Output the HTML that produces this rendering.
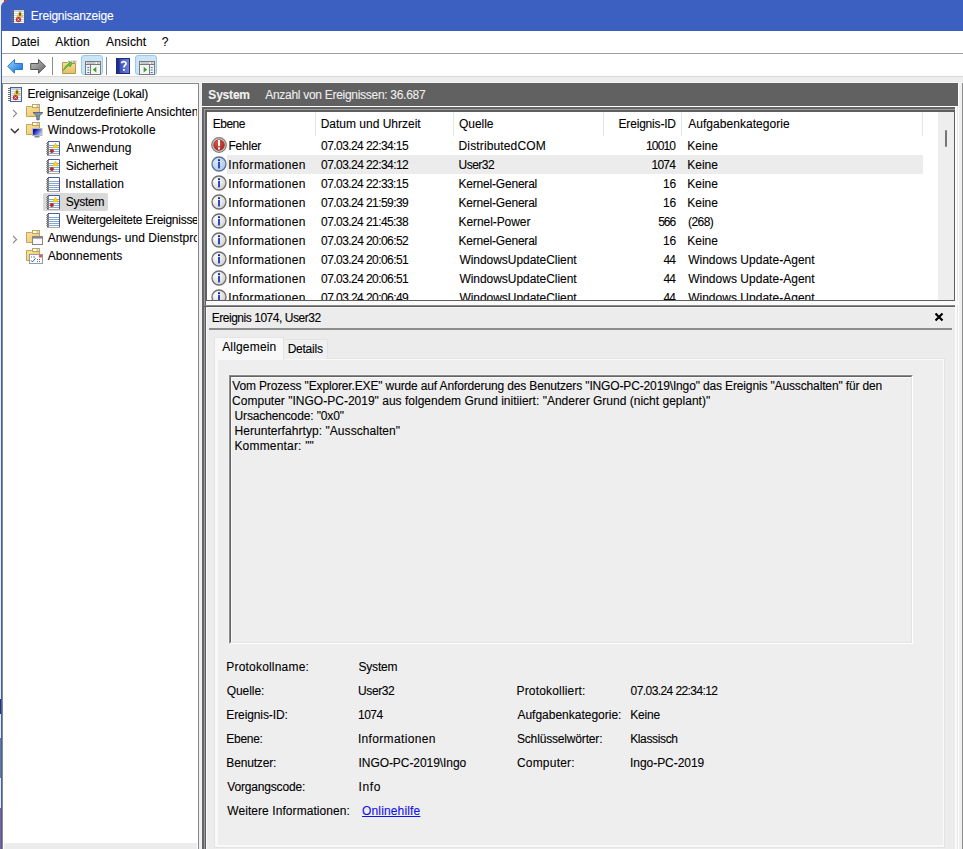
<!DOCTYPE html><html><head><meta charset="utf-8"><style>
html,body{margin:0;padding:0;}
body{width:963px;height:849px;position:relative;overflow:hidden;background:#f0f0f0;font-family:"Liberation Sans",sans-serif;}
.r{position:absolute;display:block;}
.t{position:absolute;white-space:nowrap;-webkit-text-stroke:0.1px currentColor;}
</style></head><body>
<div class="r" style="left:0px;top:0px;width:1px;height:849px;background:#eeece6"></div>
<div class="r" style="left:0px;top:699px;width:1px;height:15px;background:#2c3752"></div>
<div class="r" style="left:0px;top:738px;width:1px;height:40px;background:#6f7f6f"></div>
<div class="r" style="left:0px;top:808px;width:1px;height:41px;background:#9c5c6c"></div>
<div class="r" style="left:0px;top:0px;width:10px;height:8px;background:#f1eee6"></div>
<div class="r" style="left:4px;top:0px;width:5px;height:1.5px;background:#d8382a"></div>
<div class="r" style="left:1px;top:1px;width:962px;height:30px;background:#3b60c1;border-top-left-radius:6px"></div>
<div class="r" style="left:7px;top:0px;width:956px;height:1px;background:#3b60c1"></div>
<div class="r" style="left:1px;top:6px;width:1px;height:843px;background:#3b60c1"></div>
<svg class="r" style="left:10px;top:7.5px" width="16" height="17" viewBox="0 0 16 17">
<rect x="3.5" y="1.5" width="11" height="14" fill="#c3d3ec" stroke="#4d5d9c"/>
<path d="M4 4.5h10M4 6.5h10M4 8.5h10M4 10.5h10M4 12.5h10M4 14.5h10" stroke="#fbfdff" stroke-width="1"/>
<path d="M1 2.5h2.6M1 4.5h2.6M1 6.5h2.6M1 8.5h2.6M1 10.5h2.6M1 12.5h2.6M1 14.5h2.6" stroke="#707070" stroke-width="1.1"/>
<path d="M10 2.8L13.1 8.8H6.9z" fill="#f1cc1c" stroke="#c9a21a" stroke-width="0.5"/>
<rect x="9.4" y="4.6" width="1.2" height="3.2" fill="#222"/>
<circle cx="8.5" cy="11.6" r="2.7" fill="#c0302a"/>
<path d="M7.6 10.7l1.8 1.8M9.4 10.7l-1.8 1.8" stroke="#fff" stroke-width="0.9"/>
</svg>
<div class="t" style="left:30.79px;top:8.00px;font-size:12px;line-height:16px;color:#fff;;letter-spacing:-0.184px">Ereignisanzeige</div>
<div class="r" style="left:2px;top:31px;width:961px;height:22px;background:#fff"></div>
<div class="t" style="left:11.44px;top:34.00px;font-size:12px;line-height:16px;color:#000;;letter-spacing:-0.030px">Datei</div>
<div class="t" style="left:55.24px;top:34.00px;font-size:12px;line-height:16px;color:#000;;letter-spacing:0.236px">Aktion</div>
<div class="t" style="left:106.04px;top:34.00px;font-size:12px;line-height:16px;color:#000;;letter-spacing:0.137px">Ansicht</div>
<div class="t" style="left:161.72px;top:34.00px;font-size:12px;line-height:16px;color:#000;;letter-spacing:0.000px">?</div>
<div class="r" style="left:2px;top:53px;width:961px;height:1px;background:#a0a0a0"></div>
<div class="r" style="left:2px;top:54px;width:961px;height:22px;background:#fff"></div>
<svg class="r" style="left:7px;top:58px" width="17" height="17" viewBox="0 0 17 17"><defs><linearGradient id="ba" x1="0" y1="0" x2="1" y2="1"><stop offset="0" stop-color="#a6d6fb"/><stop offset="0.55" stop-color="#4d9cec"/><stop offset="1" stop-color="#1f62c8"/></linearGradient></defs>
<path d="M0.7 8.3L7.5 1.4V5.5H15.5V11.5H7.5V15.2z" fill="url(#ba)" stroke="#2f74cf" stroke-width="1"/></svg>
<svg class="r" style="left:30px;top:58px" width="17" height="17" viewBox="0 0 17 17"><defs><linearGradient id="fa" x1="0" y1="0" x2="1" y2="1"><stop offset="0" stop-color="#c4c4c4"/><stop offset="0.6" stop-color="#8a8a8a"/><stop offset="1" stop-color="#5e5e5e"/></linearGradient></defs>
<path d="M15.6 8.3L8.5 1.4V5.5H0.7V11.5H8.5V15.2z" fill="url(#fa)" stroke="#555" stroke-width="1"/></svg>
<div class="r" style="left:52px;top:57px;width:1px;height:18px;background:#8a8a8a"></div>
<svg class="r" style="left:62px;top:59px" width="15" height="15" viewBox="0 0 15 15"><defs><linearGradient id="fu" x1="0" y1="0" x2="0" y2="1"><stop offset="0" stop-color="#f7df9c"/><stop offset="1" stop-color="#e2bd62"/></linearGradient></defs>
<path d="M0.5 3.5h5l1 1h7v10h-13z" fill="url(#fu)" stroke="#b8964a"/>
<rect x="9" y="2" width="5" height="2" fill="#fff" stroke="#b8964a" stroke-width="0.6"/><rect x="11" y="2.5" width="2" height="1" fill="#4f8fd8"/>
<path d="M1.5 11.5C2.5 8 4.5 5.5 7.5 4.5L6.5 2L10.5 4.2L8 8L7.8 6.3C5.5 7 3.5 9 1.5 11.5z" fill="#62c43e" stroke="#3f9a24" stroke-width="0.6"/></svg>
<div class="r" style="left:81px;top:55px;width:22px;height:20px;background:#cce4f7;border:1px solid #99c9ef;border-radius:3px;box-sizing:border-box"></div>
<svg class="r" style="left:85px;top:60.5px" width="17" height="14" viewBox="0 0 17 14"><rect x="0.5" y="0.5" width="15" height="13" fill="#f4f4f4" stroke="#7a7a7a"/>
<path d="M1 3.5h14" stroke="#7a7a7a"/><rect x="1.5" y="1.5" width="9" height="1" fill="#9a9a9a"/><rect x="12" y="1.5" width="1" height="1" fill="#7a7a7a"/><rect x="13.5" y="1.5" width="1" height="1" fill="#7a7a7a"/>
<path d="M5.5 4v9" stroke="#7a7a7a"/>
<rect x="2.3" y="6" width="2" height="1" fill="#3a6fc0"/><rect x="2.3" y="8.5" width="2" height="1" fill="#3a6fc0"/><rect x="2.3" y="11" width="2" height="1" fill="#3a6fc0"/>
<path d="M11.3 5.8L7.8 8.7L11.3 11.6z" fill="#3aa12a"/></svg>
<div class="r" style="left:106px;top:57px;width:1px;height:18px;background:#8a8a8a"></div>
<svg class="r" style="left:116px;top:58px" width="14" height="16" viewBox="0 0 14 16"><defs><linearGradient id="hp" x1="0" y1="0" x2="1" y2="0"><stop offset="0" stop-color="#2c3fa8"/><stop offset="1" stop-color="#7084dc"/></linearGradient></defs>
<rect x="0.5" y="0.5" width="13" height="15" fill="url(#hp)" stroke="#1d2a7a"/>
<rect x="1" y="1" width="2.5" height="14" fill="#1f2f8e"/>
<path d="M5.6 5.3C5.6 3.2 10 3 10 5.4C10 7.1 7.9 7.3 7.9 9.6" fill="none" stroke="#fff" stroke-width="1.7"/>
<rect x="7" y="11" width="1.8" height="1.8" fill="#fff"/></svg>
<div class="r" style="left:135px;top:55px;width:22px;height:20px;background:#cce4f7;border:1px solid #99c9ef;border-radius:3px;box-sizing:border-box"></div>
<svg class="r" style="left:139px;top:60.5px" width="17" height="14" viewBox="0 0 17 14"><rect x="0.5" y="0.5" width="15" height="13" fill="#f4f4f4" stroke="#7a7a7a"/>
<path d="M1 3.5h14" stroke="#7a7a7a"/><rect x="1.5" y="1.5" width="9" height="1" fill="#9a9a9a"/><rect x="12" y="1.5" width="1" height="1" fill="#7a7a7a"/><rect x="13.5" y="1.5" width="1" height="1" fill="#7a7a7a"/>
<path d="M10.5 4v9" stroke="#7a7a7a"/>
<rect x="11.7" y="6" width="2" height="1" fill="#3a6fc0"/><rect x="11.7" y="8.5" width="2" height="1" fill="#3a6fc0"/><rect x="11.7" y="11" width="2" height="1" fill="#3a6fc0"/>
<path d="M4.7 5.8L8.2 8.7L4.7 11.6z" fill="#3aa12a"/></svg>
<div class="r" style="left:2px;top:76px;width:961px;height:1px;background:#dadada"></div>
<div class="r" style="left:2px;top:77px;width:961px;height:5px;background:#ededed"></div>
<div class="r" style="left:2px;top:82px;width:961px;height:1px;background:#f6f6f6"></div>
<div class="r" style="left:2px;top:83px;width:197px;height:766px;background:#fff;border:1px solid #828790;border-bottom:none;box-sizing:border-box"></div>
<div class="r" style="left:4px;top:843px;width:193px;height:6px;background:#ececec"></div>
<div class="r" style="left:43px;top:193px;width:65px;height:17.5px;background:#d9d9d9;border-radius:2px"></div>
<div class="r" style="left:3px;top:84px;width:194px;height:759px;overflow:hidden">
<div class="r" style="left:-3px;top:-84px;width:963px;height:849px">
<svg class="r" style="left:7px;top:86px" width="16" height="17" viewBox="0 0 16 17">
<rect x="3.5" y="1.5" width="11" height="14" fill="#c3d3ec" stroke="#4d5d9c"/>
<path d="M4 4.5h10M4 6.5h10M4 8.5h10M4 10.5h10M4 12.5h10M4 14.5h10" stroke="#fbfdff" stroke-width="1"/>
<path d="M1 2.5h2.6M1 4.5h2.6M1 6.5h2.6M1 8.5h2.6M1 10.5h2.6M1 12.5h2.6M1 14.5h2.6" stroke="#707070" stroke-width="1.1"/>
<path d="M10 2.8L13.1 8.8H6.9z" fill="#f1cc1c" stroke="#c9a21a" stroke-width="0.5"/>
<rect x="9.4" y="4.6" width="1.2" height="3.2" fill="#222"/>
<circle cx="8.5" cy="11.6" r="2.7" fill="#c0302a"/>
<path d="M7.6 10.7l1.8 1.8M9.4 10.7l-1.8 1.8" stroke="#fff" stroke-width="0.9"/>
</svg>
<div class="t" style="left:27.44px;top:86.00px;font-size:12px;line-height:16px;color:#000;;letter-spacing:-0.210px">Ereignisanzeige (Lokal)</div>
<svg class="r" style="left:26px;top:104px" width="18" height="17" viewBox="0 0 18 17">
<defs><linearGradient id="fg" x1="0" y1="0" x2="1" y2="1"><stop offset="0" stop-color="#f9e3a0"/><stop offset="1" stop-color="#e9c46a"/></linearGradient></defs>
<path d="M0.5 2.5h5l1 1h7v9h-13z" fill="url(#fg)" stroke="#c7a451" stroke-width="1"/>
<rect x="6.5" y="0.5" width="7" height="3" fill="#fff" stroke="#c7a451"/>
<rect x="10.5" y="1.5" width="2" height="1" fill="#4f8fd8"/>
<path d="M7 8.5h10l-3.8 3.5v3.8h-2.4v-3.8z" fill="#7f95ae" stroke="#46566e" stroke-width="0.8"/></svg>
<svg class="r" style="left:12px;top:109px" width="6" height="9" viewBox="0 0 6 9"><path d="M1 0.8L4.6 4.5L1 8.2" fill="none" stroke="#8c8c8c" stroke-width="1.2"/></svg>
<div class="t" style="left:46.74px;top:104.00px;font-size:12px;line-height:16px;color:#000;;letter-spacing:-0.042px">Benutzerdefinierte Ansichten</div>
<svg class="r" style="left:26px;top:122px" width="18" height="17" viewBox="0 0 18 17">
<defs><linearGradient id="fg" x1="0" y1="0" x2="1" y2="1"><stop offset="0" stop-color="#f9e3a0"/><stop offset="1" stop-color="#e9c46a"/></linearGradient></defs>
<path d="M0.5 2.5h5l1 1h7v9h-13z" fill="url(#fg)" stroke="#c7a451" stroke-width="1"/>
<rect x="6.5" y="0.5" width="7" height="3" fill="#fff" stroke="#c7a451"/>
<rect x="10.5" y="1.5" width="2" height="1" fill="#4f8fd8"/>
<defs><linearGradient id="scr" x1="0" y1="0" x2="1" y2="0.6"><stop offset="0.3" stop-color="#0a10b8"/><stop offset="1" stop-color="#b8c8f8"/></linearGradient></defs><rect x="6.5" y="6.5" width="9.5" height="7" fill="url(#scr)" stroke="#b9b9b0" stroke-width="1"/><path d="M8.5 14.8h5" stroke="#666" stroke-width="1.2"/></svg>
<svg class="r" style="left:9.5px;top:128px" width="10" height="6" viewBox="0 0 10 6"><path d="M0.8 0.8L4.8 4.8L8.8 0.8" fill="none" stroke="#333" stroke-width="1.4"/></svg>
<div class="t" style="left:47.64px;top:122.00px;font-size:12px;line-height:16px;color:#000;;letter-spacing:0.111px">Windows-Protokolle</div>
<svg class="r" style="left:45px;top:141px" width="16" height="16" viewBox="0 0 16 16">
<rect x="3.5" y="0.5" width="11" height="14" fill="#fff"/>
<path d="M3 0.5h11.5v14" fill="none" stroke="#4b5ca4"/>
<path d="M3.5 14.5h11" stroke="#a8a8a8"/>
<path d="M4 4.5h10M4 6.5h10M4 8.5h10M4 10.5h10M4 12.5h10" stroke="#86a8d0" stroke-width="1"/>
<rect x="2" y="1" width="1.8" height="13.5" fill="#5a5a5a"/>
<path d="M1 2.5h2.5M1 4.5h2.5M1 6.5h2.5M1 8.5h2.5M1 10.5h2.5M1 12.5h2.5" stroke="#9a9a9a" stroke-width="1"/>
<path d="M10.5 2L13.3 6.9H7.7z" fill="#f3dc1c" stroke="#c9b010" stroke-width="0.5"/><circle cx="6.9" cy="10.1" r="2" fill="#b82a22"/></svg>
<div class="t" style="left:66.34px;top:140.00px;font-size:12px;line-height:16px;color:#000;;letter-spacing:0.222px">Anwendung</div>
<svg class="r" style="left:45px;top:159px" width="16" height="16" viewBox="0 0 16 16">
<rect x="3.5" y="0.5" width="11" height="14" fill="#fff"/>
<path d="M3 0.5h11.5v14" fill="none" stroke="#4b5ca4"/>
<path d="M3.5 14.5h11" stroke="#a8a8a8"/>
<path d="M4 4.5h10M4 6.5h10M4 8.5h10M4 10.5h10M4 12.5h10" stroke="#86a8d0" stroke-width="1"/>
<rect x="2" y="1" width="1.8" height="13.5" fill="#5a5a5a"/>
<path d="M1 2.5h2.5M1 4.5h2.5M1 6.5h2.5M1 8.5h2.5M1 10.5h2.5M1 12.5h2.5" stroke="#9a9a9a" stroke-width="1"/>
<path d="M10.5 2L13.3 6.9H7.7z" fill="#f3dc1c" stroke="#c9b010" stroke-width="0.5"/><circle cx="6.9" cy="10.1" r="2" fill="#b82a22"/></svg>
<div class="t" style="left:65.86px;top:158.00px;font-size:12px;line-height:16px;color:#000;;letter-spacing:-0.171px">Sicherheit</div>
<svg class="r" style="left:45px;top:177px" width="16" height="16" viewBox="0 0 16 16">
<rect x="3.5" y="0.5" width="11" height="14" fill="#fff"/>
<path d="M3 0.5h11.5v14" fill="none" stroke="#4b5ca4"/>
<path d="M3.5 14.5h11" stroke="#a8a8a8"/>
<path d="M4 4.5h10M4 6.5h10M4 8.5h10M4 10.5h10M4 12.5h10" stroke="#86a8d0" stroke-width="1"/>
<rect x="2" y="1" width="1.8" height="13.5" fill="#5a5a5a"/>
<path d="M1 2.5h2.5M1 4.5h2.5M1 6.5h2.5M1 8.5h2.5M1 10.5h2.5M1 12.5h2.5" stroke="#9a9a9a" stroke-width="1"/>
</svg>
<div class="t" style="left:65.32px;top:176.00px;font-size:12px;line-height:16px;color:#000;;letter-spacing:0.118px">Installation</div>
<svg class="r" style="left:45px;top:195px" width="16" height="16" viewBox="0 0 16 16">
<rect x="3.5" y="0.5" width="11" height="14" fill="#fff"/>
<path d="M3 0.5h11.5v14" fill="none" stroke="#4b5ca4"/>
<path d="M3.5 14.5h11" stroke="#a8a8a8"/>
<path d="M4 4.5h10M4 6.5h10M4 8.5h10M4 10.5h10M4 12.5h10" stroke="#86a8d0" stroke-width="1"/>
<rect x="2" y="1" width="1.8" height="13.5" fill="#5a5a5a"/>
<path d="M1 2.5h2.5M1 4.5h2.5M1 6.5h2.5M1 8.5h2.5M1 10.5h2.5M1 12.5h2.5" stroke="#9a9a9a" stroke-width="1"/>
<path d="M10.5 2L13.3 6.9H7.7z" fill="#f3dc1c" stroke="#c9b010" stroke-width="0.5"/><circle cx="6.9" cy="10.1" r="2" fill="#b82a22"/></svg>
<div class="t" style="left:65.86px;top:194.00px;font-size:12px;line-height:16px;color:#000;;letter-spacing:-0.288px">System</div>
<svg class="r" style="left:45px;top:213px" width="16" height="16" viewBox="0 0 16 16">
<rect x="3.5" y="0.5" width="11" height="14" fill="#fff"/>
<path d="M3 0.5h11.5v14" fill="none" stroke="#4b5ca4"/>
<path d="M3.5 14.5h11" stroke="#a8a8a8"/>
<path d="M4 4.5h10M4 6.5h10M4 8.5h10M4 10.5h10M4 12.5h10" stroke="#86a8d0" stroke-width="1"/>
<rect x="2" y="1" width="1.8" height="13.5" fill="#5a5a5a"/>
<path d="M1 2.5h2.5M1 4.5h2.5M1 6.5h2.5M1 8.5h2.5M1 10.5h2.5M1 12.5h2.5" stroke="#9a9a9a" stroke-width="1"/>
</svg>
<div class="t" style="left:66.34px;top:212.00px;font-size:12px;line-height:16px;color:#000;;letter-spacing:-0.269px">Weitergeleitete Ereignisse</div>
<svg class="r" style="left:26px;top:230px" width="18" height="17" viewBox="0 0 18 17">
<defs><linearGradient id="fg" x1="0" y1="0" x2="1" y2="1"><stop offset="0" stop-color="#f9e3a0"/><stop offset="1" stop-color="#e9c46a"/></linearGradient></defs>
<path d="M0.5 2.5h5l1 1h7v9h-13z" fill="url(#fg)" stroke="#c7a451" stroke-width="1"/>
<rect x="6.5" y="0.5" width="7" height="3" fill="#fff" stroke="#c7a451"/>
<rect x="10.5" y="1.5" width="2" height="1" fill="#4f8fd8"/>
<rect x="6.5" y="6.5" width="10" height="8" fill="#fafafa" stroke="#868686"/><path d="M7 7.8h9" stroke="#868686" stroke-width="1.6"/></svg>
<svg class="r" style="left:12px;top:235px" width="6" height="9" viewBox="0 0 6 9"><path d="M1 0.8L4.6 4.5L1 8.2" fill="none" stroke="#8c8c8c" stroke-width="1.2"/></svg>
<div class="t" style="left:47.64px;top:230.00px;font-size:12px;line-height:16px;color:#000;;letter-spacing:0.036px">Anwendungs- und Dienstprotokolle</div>
<svg class="r" style="left:26px;top:248px" width="18" height="17" viewBox="0 0 18 17">
<defs><linearGradient id="fg" x1="0" y1="0" x2="1" y2="1"><stop offset="0" stop-color="#f9e3a0"/><stop offset="1" stop-color="#e9c46a"/></linearGradient></defs>
<path d="M0.5 2.5h5l1 1h7v9h-13z" fill="url(#fg)" stroke="#c7a451" stroke-width="1"/>
<rect x="6.5" y="0.5" width="7" height="3" fill="#fff" stroke="#c7a451"/>
<rect x="10.5" y="1.5" width="2" height="1" fill="#4f8fd8"/>
<rect x="3.5" y="6.5" width="13" height="9" fill="#fff" stroke="#9a9a9a"/><rect x="13" y="7" width="3" height="2.5" fill="#e05555"/><path d="M5 12.3l1.5 1.7l3-3.8" stroke="#3a6fc0" fill="none"/><rect x="5" y="8.5" width="1" height="1" fill="#3a6fc0"/><rect x="7" y="8.5" width="2" height="1" fill="#8a8aa0"/><rect x="11" y="11" width="1" height="1" fill="#3a6fc0"/><rect x="13" y="11" width="1" height="1" fill="#3a6fc0"/><rect x="11" y="13" width="1" height="1" fill="#3a6fc0"/><rect x="13" y="13" width="1" height="1" fill="#3a6fc0"/></svg>
<div class="t" style="left:47.64px;top:248.00px;font-size:12px;line-height:16px;color:#000;;letter-spacing:0.064px">Abonnements</div>
</div></div>
<div class="r" style="left:202px;top:83px;width:756px;height:23px;background:#616161"></div>
<div class="t" style="left:208.34px;top:87.00px;font-size:12px;line-height:16px;color:#f2f2f2;;letter-spacing:-0.196px;font-weight:bold">System</div>
<div class="t" style="left:265.24px;top:87.00px;font-size:12px;line-height:16px;color:#eeeeee;;letter-spacing:-0.290px">Anzahl von Ereignissen: 36.687</div>
<div class="r" style="left:202px;top:106px;width:756px;height:1px;background:#fff"></div>
<div class="r" style="left:202px;top:107px;width:2px;height:742px;background:#656565"></div>
<div class="r" style="left:204px;top:107px;width:1px;height:742px;background:#9a9a9a"></div>
<div class="r" style="left:205px;top:107px;width:1px;height:742px;background:#5e5e5e"></div>
<div class="r" style="left:204px;top:107px;width:751px;height:2px;background:#656565"></div>
<div class="r" style="left:205px;top:109px;width:750px;height:1px;background:#9a9a9a"></div>
<div class="r" style="left:206px;top:110px;width:749px;height:2px;background:#5e5e5e"></div>
<div class="r" style="left:206px;top:112px;width:1px;height:189px;background:#5e5e5e"></div>
<div class="r" style="left:207px;top:112px;width:747px;height:188px;background:#fff"></div>
<div class="r" style="left:954px;top:110px;width:1px;height:191px;background:#5e5e5e"></div>
<div class="r" style="left:206px;top:300px;width:749px;height:1px;background:#5e5e5e"></div>
<div class="r" style="left:955px;top:107px;width:2px;height:198px;background:#fff"></div>
<div class="r" style="left:957px;top:107px;width:1px;height:742px;background:#e6e6e6"></div>
<div class="r" style="left:206px;top:301px;width:752px;height:4px;background:#fafafa"></div>
<div class="r" style="left:938px;top:112px;width:16px;height:188px;background:#eeeeee"></div>
<div class="r" style="left:945px;top:130px;width:2px;height:17px;background:#767676;border-radius:1px"></div>
<div class="r" style="left:314.5px;top:112px;width:1px;height:24px;background:#e5e5e5"></div>
<div class="r" style="left:602.5px;top:112px;width:1px;height:24px;background:#e5e5e5"></div>
<div class="r" style="left:681px;top:112px;width:1px;height:24px;background:#e5e5e5"></div>
<div class="r" style="left:453px;top:112px;width:1px;height:24px;background:#e5e5e5"></div>
<div class="r" style="left:922px;top:112px;width:1px;height:24px;background:#e5e5e5"></div>
<div class="t" style="left:212.74px;top:116.00px;font-size:12px;line-height:16px;color:#000;;letter-spacing:-0.495px">Ebene</div>
<div class="t" style="left:320.64px;top:116.00px;font-size:12px;line-height:16px;color:#000;;letter-spacing:0.000px">Datum und Uhrzeit</div>
<div class="t" style="left:458.96px;top:116.00px;font-size:12px;line-height:16px;color:#000;;letter-spacing:-0.040px">Quelle</div>
<div class="t" style="left:618.54px;top:116.00px;font-size:12px;line-height:16px;color:#000;;letter-spacing:-0.184px">Ereignis-ID</div>
<div class="t" style="left:688.14px;top:116.00px;font-size:12px;line-height:16px;color:#000;;letter-spacing:0.054px">Aufgabenkategorie</div>
<div class="r" style="left:207px;top:136px;width:731px;height:164px;overflow:hidden">
<div class="r" style="left:-207px;top:-136px;width:963px;height:849px">
<svg class="r" style="left:211px;top:137px" width="16" height="16" viewBox="0 0 16 16">
<defs><radialGradient id="eg1" cx="0.4" cy="0.3" r="0.75"><stop offset="0" stop-color="#d8534a"/><stop offset="1" stop-color="#a3261c"/></radialGradient></defs>
<circle cx="8" cy="8" r="7.3" fill="#d0d0d0" stroke="#7d7d7d" stroke-width="1.2"/>
<circle cx="8" cy="8" r="5.8" fill="url(#eg1)"/>
<rect x="7" y="3" width="2" height="6.2" fill="#fff"/>
<rect x="7" y="10.4" width="2" height="2" fill="#fff"/>
</svg>
<div class="t" style="left:228.44px;top:138.00px;font-size:12px;line-height:16px;color:#000;;letter-spacing:-0.224px">Fehler</div>
<div class="t" style="left:321.12px;top:138.00px;font-size:12px;line-height:16px;color:#000;;letter-spacing:-0.579px">07.03.24 22:34:15</div>
<div class="t" style="left:458.54px;top:138.00px;font-size:12px;line-height:16px;color:#000;;letter-spacing:0.138px">DistributedCOM</div>
<div class="t" style="left:646.0px;top:138.00px;font-size:12px;line-height:16px;color:#000;;letter-spacing:-0.845px">10010</div>
<div class="t" style="left:687.24px;top:138.00px;font-size:12px;line-height:16px;color:#000;;letter-spacing:0.010px">Keine</div>
<div class="r" style="left:227px;top:155px;width:696px;height:19px;background:#ececec"></div>
<svg class="r" style="left:211px;top:156px" width="16" height="16" viewBox="0 0 16 16">
<defs><radialGradient id="ig2" cx="0.35" cy="0.35" r="0.8"><stop offset="0" stop-color="#dbe8f6"/><stop offset="1" stop-color="#a9c3e0"/></radialGradient></defs>
<circle cx="8" cy="8" r="7" fill="url(#ig2)" stroke="#567398" stroke-width="1.3"/>
<rect x="7" y="3.3" width="2" height="1.8" fill="#0f2590"/>
<rect x="7" y="6" width="2" height="6.4" fill="#2a4cc0"/>
</svg>
<div class="t" style="left:228.32px;top:157.00px;font-size:12px;line-height:16px;color:#000;;letter-spacing:0.315px">Informationen</div>
<div class="t" style="left:321.12px;top:157.00px;font-size:12px;line-height:16px;color:#000;;letter-spacing:-0.571px">07.03.24 22:34:12</div>
<div class="t" style="left:458.6px;top:157.00px;font-size:12px;line-height:16px;color:#000;;letter-spacing:-0.520px">User32</div>
<div class="t" style="left:651.5px;top:157.00px;font-size:12px;line-height:16px;color:#000;;letter-spacing:-0.780px">1074</div>
<div class="t" style="left:687.24px;top:157.00px;font-size:12px;line-height:16px;color:#000;;letter-spacing:0.010px">Keine</div>
<svg class="r" style="left:211px;top:175px" width="16" height="16" viewBox="0 0 16 16">
<defs><radialGradient id="ig3" cx="0.35" cy="0.35" r="0.8"><stop offset="0" stop-color="#ffffff"/><stop offset="1" stop-color="#c9c9c9"/></radialGradient></defs>
<circle cx="8" cy="8" r="7" fill="url(#ig3)" stroke="#6d6d6d" stroke-width="1.3"/>
<rect x="7" y="3.3" width="2" height="1.8" fill="#0f2590"/>
<rect x="7" y="6" width="2" height="6.4" fill="#2a4cc0"/>
</svg>
<div class="t" style="left:228.32px;top:176.00px;font-size:12px;line-height:16px;color:#000;;letter-spacing:0.315px">Informationen</div>
<div class="t" style="left:321.12px;top:176.00px;font-size:12px;line-height:16px;color:#000;;letter-spacing:-0.579px">07.03.24 22:33:15</div>
<div class="t" style="left:458.54px;top:176.00px;font-size:12px;line-height:16px;color:#000;;letter-spacing:-0.202px">Kernel-General</div>
<div class="t" style="left:662.9px;top:176.00px;font-size:12px;line-height:16px;color:#000;;letter-spacing:-0.180px">16</div>
<div class="t" style="left:687.24px;top:176.00px;font-size:12px;line-height:16px;color:#000;;letter-spacing:0.010px">Keine</div>
<svg class="r" style="left:211px;top:194px" width="16" height="16" viewBox="0 0 16 16">
<defs><radialGradient id="ig4" cx="0.35" cy="0.35" r="0.8"><stop offset="0" stop-color="#ffffff"/><stop offset="1" stop-color="#c9c9c9"/></radialGradient></defs>
<circle cx="8" cy="8" r="7" fill="url(#ig4)" stroke="#6d6d6d" stroke-width="1.3"/>
<rect x="7" y="3.3" width="2" height="1.8" fill="#0f2590"/>
<rect x="7" y="6" width="2" height="6.4" fill="#2a4cc0"/>
</svg>
<div class="t" style="left:228.32px;top:195.00px;font-size:12px;line-height:16px;color:#000;;letter-spacing:0.315px">Informationen</div>
<div class="t" style="left:321.12px;top:195.00px;font-size:12px;line-height:16px;color:#000;;letter-spacing:-0.575px">07.03.24 21:59:39</div>
<div class="t" style="left:458.54px;top:195.00px;font-size:12px;line-height:16px;color:#000;;letter-spacing:-0.202px">Kernel-General</div>
<div class="t" style="left:662.9px;top:195.00px;font-size:12px;line-height:16px;color:#000;;letter-spacing:-0.180px">16</div>
<div class="t" style="left:687.24px;top:195.00px;font-size:12px;line-height:16px;color:#000;;letter-spacing:0.010px">Keine</div>
<svg class="r" style="left:211px;top:213px" width="16" height="16" viewBox="0 0 16 16">
<defs><radialGradient id="ig5" cx="0.35" cy="0.35" r="0.8"><stop offset="0" stop-color="#ffffff"/><stop offset="1" stop-color="#c9c9c9"/></radialGradient></defs>
<circle cx="8" cy="8" r="7" fill="url(#ig5)" stroke="#6d6d6d" stroke-width="1.3"/>
<rect x="7" y="3.3" width="2" height="1.8" fill="#0f2590"/>
<rect x="7" y="6" width="2" height="6.4" fill="#2a4cc0"/>
</svg>
<div class="t" style="left:228.32px;top:214.00px;font-size:12px;line-height:16px;color:#000;;letter-spacing:0.315px">Informationen</div>
<div class="t" style="left:321.12px;top:214.00px;font-size:12px;line-height:16px;color:#000;;letter-spacing:-0.579px">07.03.24 21:45:38</div>
<div class="t" style="left:458.54px;top:214.00px;font-size:12px;line-height:16px;color:#000;;letter-spacing:-0.075px">Kernel-Power</div>
<div class="t" style="left:658.32px;top:214.00px;font-size:12px;line-height:16px;color:#000;;letter-spacing:-1.130px">566</div>
<div class="t" style="left:687.98px;top:214.00px;font-size:12px;line-height:16px;color:#000;;letter-spacing:-0.530px">(268)</div>
<svg class="r" style="left:211px;top:232px" width="16" height="16" viewBox="0 0 16 16">
<defs><radialGradient id="ig6" cx="0.35" cy="0.35" r="0.8"><stop offset="0" stop-color="#ffffff"/><stop offset="1" stop-color="#c9c9c9"/></radialGradient></defs>
<circle cx="8" cy="8" r="7" fill="url(#ig6)" stroke="#6d6d6d" stroke-width="1.3"/>
<rect x="7" y="3.3" width="2" height="1.8" fill="#0f2590"/>
<rect x="7" y="6" width="2" height="6.4" fill="#2a4cc0"/>
</svg>
<div class="t" style="left:228.32px;top:233.00px;font-size:12px;line-height:16px;color:#000;;letter-spacing:0.315px">Informationen</div>
<div class="t" style="left:321.12px;top:233.00px;font-size:12px;line-height:16px;color:#000;;letter-spacing:-0.571px">07.03.24 20:06:52</div>
<div class="t" style="left:458.54px;top:233.00px;font-size:12px;line-height:16px;color:#000;;letter-spacing:-0.202px">Kernel-General</div>
<div class="t" style="left:662.9px;top:233.00px;font-size:12px;line-height:16px;color:#000;;letter-spacing:-0.180px">16</div>
<div class="t" style="left:687.24px;top:233.00px;font-size:12px;line-height:16px;color:#000;;letter-spacing:0.010px">Keine</div>
<svg class="r" style="left:211px;top:251px" width="16" height="16" viewBox="0 0 16 16">
<defs><radialGradient id="ig7" cx="0.35" cy="0.35" r="0.8"><stop offset="0" stop-color="#ffffff"/><stop offset="1" stop-color="#c9c9c9"/></radialGradient></defs>
<circle cx="8" cy="8" r="7" fill="url(#ig7)" stroke="#6d6d6d" stroke-width="1.3"/>
<rect x="7" y="3.3" width="2" height="1.8" fill="#0f2590"/>
<rect x="7" y="6" width="2" height="6.4" fill="#2a4cc0"/>
</svg>
<div class="t" style="left:228.32px;top:252.00px;font-size:12px;line-height:16px;color:#000;;letter-spacing:0.315px">Informationen</div>
<div class="t" style="left:321.12px;top:252.00px;font-size:12px;line-height:16px;color:#000;;letter-spacing:-0.571px">07.03.24 20:06:51</div>
<div class="t" style="left:459.44px;top:252.00px;font-size:12px;line-height:16px;color:#000;;letter-spacing:-0.044px">WindowsUpdateClient</div>
<div class="t" style="left:663.5px;top:252.00px;font-size:12px;line-height:16px;color:#000;;letter-spacing:-0.960px">44</div>
<div class="t" style="left:688.14px;top:252.00px;font-size:12px;line-height:16px;color:#000;;letter-spacing:0.024px">Windows Update-Agent</div>
<svg class="r" style="left:211px;top:270px" width="16" height="16" viewBox="0 0 16 16">
<defs><radialGradient id="ig8" cx="0.35" cy="0.35" r="0.8"><stop offset="0" stop-color="#ffffff"/><stop offset="1" stop-color="#c9c9c9"/></radialGradient></defs>
<circle cx="8" cy="8" r="7" fill="url(#ig8)" stroke="#6d6d6d" stroke-width="1.3"/>
<rect x="7" y="3.3" width="2" height="1.8" fill="#0f2590"/>
<rect x="7" y="6" width="2" height="6.4" fill="#2a4cc0"/>
</svg>
<div class="t" style="left:228.32px;top:271.00px;font-size:12px;line-height:16px;color:#000;;letter-spacing:0.315px">Informationen</div>
<div class="t" style="left:321.12px;top:271.00px;font-size:12px;line-height:16px;color:#000;;letter-spacing:-0.571px">07.03.24 20:06:51</div>
<div class="t" style="left:459.44px;top:271.00px;font-size:12px;line-height:16px;color:#000;;letter-spacing:-0.044px">WindowsUpdateClient</div>
<div class="t" style="left:663.5px;top:271.00px;font-size:12px;line-height:16px;color:#000;;letter-spacing:-0.960px">44</div>
<div class="t" style="left:688.14px;top:271.00px;font-size:12px;line-height:16px;color:#000;;letter-spacing:0.024px">Windows Update-Agent</div>
<svg class="r" style="left:211px;top:289px" width="16" height="16" viewBox="0 0 16 16">
<defs><radialGradient id="ig9" cx="0.35" cy="0.35" r="0.8"><stop offset="0" stop-color="#ffffff"/><stop offset="1" stop-color="#c9c9c9"/></radialGradient></defs>
<circle cx="8" cy="8" r="7" fill="url(#ig9)" stroke="#6d6d6d" stroke-width="1.3"/>
<rect x="7" y="3.3" width="2" height="1.8" fill="#0f2590"/>
<rect x="7" y="6" width="2" height="6.4" fill="#2a4cc0"/>
</svg>
<div class="t" style="left:228.32px;top:290.00px;font-size:12px;line-height:16px;color:#000;;letter-spacing:0.315px">Informationen</div>
<div class="t" style="left:321.12px;top:290.00px;font-size:12px;line-height:16px;color:#000;;letter-spacing:-0.575px">07.03.24 20:06:49</div>
<div class="t" style="left:459.44px;top:290.00px;font-size:12px;line-height:16px;color:#000;;letter-spacing:-0.044px">WindowsUpdateClient</div>
<div class="t" style="left:663.5px;top:290.00px;font-size:12px;line-height:16px;color:#000;;letter-spacing:-0.960px">44</div>
<div class="t" style="left:688.14px;top:290.00px;font-size:12px;line-height:16px;color:#000;;letter-spacing:0.024px">Windows Update-Agent</div>
</div></div>
<div class="r" style="left:204px;top:305px;width:752px;height:1px;background:#8c8c8c"></div>
<div class="r" style="left:204px;top:306px;width:751px;height:1px;background:#5c5c5c"></div>
<div class="r" style="left:206px;top:307px;width:749px;height:542px;background:#ececec"></div>
<div class="r" style="left:206px;top:307px;width:749px;height:1px;background:#f8f8f8"></div>
<div class="r" style="left:206px;top:307px;width:1px;height:542px;background:#f8f8f8"></div>
<div class="r" style="left:955px;top:305px;width:2px;height:544px;background:#fafafa"></div>
<div class="r" style="left:958px;top:83px;width:1px;height:766px;background:#ffffff"></div>
<div class="r" style="left:959px;top:83px;width:3px;height:766px;background:#f0f0f0"></div>
<div class="r" style="left:962px;top:83px;width:1px;height:766px;background:#8c8c8c"></div>
<div class="t" style="left:211.64px;top:310.00px;font-size:12px;line-height:16px;color:#000;;letter-spacing:-0.459px">Ereignis 1074, User32</div>
<svg class="r" style="left:934px;top:312px" width="10" height="10" viewBox="0 0 10 10"><path d="M1.5 1.5L8.5 8.5M8.5 1.5L1.5 8.5" stroke="#000" stroke-width="2.2"/></svg>
<div class="r" style="left:209px;top:328px;width:743px;height:2px;background:#8c8c8c"></div>
<div class="r" style="left:214px;top:358px;width:731px;height:490px;background:#f9f9f9;border:1px solid #e3e3e3;box-sizing:border-box"></div>
<div class="r" style="left:218px;top:360px;width:725px;height:485px;background:#eeeeee"></div>
<div class="r" style="left:214px;top:337px;width:70px;height:23px;background:#f8f8f8;border:1px solid #e3e3e3;border-bottom:none;box-sizing:border-box"></div>
<div class="r" style="left:283px;top:339px;width:45px;height:20px;background:#f0f0f0;border:1px solid #e3e3e3;border-bottom:none;box-sizing:border-box"></div>
<div class="r" style="left:215px;top:358px;width:68px;height:2px;background:#f8f8f8"></div>
<div class="t" style="left:222.14px;top:339.00px;font-size:12px;line-height:16px;color:#000;;letter-spacing:0.183px">Allgemein</div>
<div class="t" style="left:287.64px;top:341.00px;font-size:12px;line-height:16px;color:#000;;letter-spacing:-0.230px">Details</div>
<div class="r" style="left:228px;top:374px;width:685px;height:270px;background:#f4f4f4"></div>
<div class="r" style="left:229px;top:375px;width:684px;height:269px;border-left:1px solid #8a8a8a;border-top:1px solid #8a8a8a;border-right:1px solid #fff;border-bottom:1px solid #fff;box-sizing:border-box"></div>
<div class="r" style="left:230px;top:376px;width:682px;height:267px;border-left:1px solid #646464;border-top:1px solid #646464;border-right:1px solid #e3e3e3;border-bottom:1px solid #e3e3e3;box-sizing:border-box"></div>
<div class="r" style="left:231px;top:377px;width:680px;height:265px;background:#eeeeee;border-left:1px solid #fafafa;border-top:1px solid #fafafa;box-sizing:border-box"></div>
<div class="t" style="left:232.24px;top:378.00px;font-size:12px;line-height:16px;color:#000;;letter-spacing:-0.143px">Vom Prozess &quot;Explorer.EXE&quot; wurde auf Anforderung des Benutzers &quot;INGO-PC-2019\Ingo&quot; das Ereignis &quot;Ausschalten&quot; für den</div>
<div class="t" style="left:232.1px;top:393.00px;font-size:12px;line-height:16px;color:#000;;letter-spacing:0.010px">Computer &quot;INGO-PC-2019&quot; aus folgendem Grund initiiert: &quot;Anderer Grund (nicht geplant)&quot;</div>
<div class="t" style="left:234.5px;top:408.00px;font-size:12px;line-height:16px;color:#000;;letter-spacing:-0.137px">Ursachencode: &quot;0x0&quot;</div>
<div class="t" style="left:234.44px;top:423.00px;font-size:12px;line-height:16px;color:#000;;letter-spacing:0.058px">Herunterfahrtyp: &quot;Ausschalten&quot;</div>
<div class="t" style="left:234.44px;top:438.00px;font-size:12px;line-height:16px;color:#000;;letter-spacing:0.182px">Kommentar: &quot;&quot;</div>
<div class="t" style="left:226.34px;top:659.00px;font-size:12px;line-height:16px;color:#000;;letter-spacing:0.189px">Protokollname:</div>
<div class="t" style="left:358.46px;top:659.00px;font-size:12px;line-height:16px;color:#000;;letter-spacing:-0.168px">System</div>
<div class="t" style="left:226.76px;top:683.00px;font-size:12px;line-height:16px;color:#000;;letter-spacing:-0.077px">Quelle:</div>
<div class="t" style="left:358.1px;top:683.00px;font-size:12px;line-height:16px;color:#000;;letter-spacing:-0.420px">User32</div>
<div class="t" style="left:226.34px;top:707.00px;font-size:12px;line-height:16px;color:#000;;letter-spacing:-0.109px">Ereignis-ID:</div>
<div class="t" style="left:358.1px;top:707.00px;font-size:12px;line-height:16px;color:#000;;letter-spacing:-0.547px">1074</div>
<div class="t" style="left:226.34px;top:731.00px;font-size:12px;line-height:16px;color:#000;;letter-spacing:-0.288px">Ebene:</div>
<div class="t" style="left:357.92px;top:731.00px;font-size:12px;line-height:16px;color:#000;;letter-spacing:0.340px">Informationen</div>
<div class="t" style="left:226.34px;top:755.00px;font-size:12px;line-height:16px;color:#000;;letter-spacing:-0.165px">Benutzer:</div>
<div class="t" style="left:358.52px;top:755.00px;font-size:12px;line-height:16px;color:#000;;letter-spacing:-0.066px">INGO-PC-2019\Ingo</div>
<div class="t" style="left:227.24px;top:779.00px;font-size:12px;line-height:16px;color:#000;;letter-spacing:-0.167px">Vorgangscode:</div>
<div class="t" style="left:358.52px;top:779.00px;font-size:12px;line-height:16px;color:#000;;letter-spacing:0.593px">Info</div>
<div class="t" style="left:227.24px;top:803.00px;font-size:12px;line-height:16px;color:#000;;letter-spacing:0.071px">Weitere Informationen:</div>
<div class="t" style="left:362.06px;top:803.00px;font-size:12px;line-height:16px;color:#1010f0;text-decoration:underline;letter-spacing:0.148px">Onlinehilfe</div>
<div class="t" style="left:516.54px;top:683.00px;font-size:12px;line-height:16px;color:#000;;letter-spacing:0.168px">Protokolliert:</div>
<div class="t" style="left:630.62px;top:683.00px;font-size:12px;line-height:16px;color:#000;;letter-spacing:-0.584px">07.03.24 22:34:12</div>
<div class="t" style="left:517.44px;top:707.00px;font-size:12px;line-height:16px;color:#000;;letter-spacing:-0.006px">Aufgabenkategorie:</div>
<div class="t" style="left:630.14px;top:707.00px;font-size:12px;line-height:16px;color:#000;;letter-spacing:-0.165px">Keine</div>
<div class="t" style="left:516.96px;top:731.00px;font-size:12px;line-height:16px;color:#000;;letter-spacing:-0.167px">Schlüsselwörter:</div>
<div class="t" style="left:630.14px;top:731.00px;font-size:12px;line-height:16px;color:#000;;letter-spacing:-0.357px">Klassisch</div>
<div class="t" style="left:516.9px;top:755.00px;font-size:12px;line-height:16px;color:#000;;letter-spacing:0.212px">Computer:</div>
<div class="t" style="left:630.02px;top:755.00px;font-size:12px;line-height:16px;color:#000;;letter-spacing:-0.044px">Ingo-PC-2019</div>
</body></html>
